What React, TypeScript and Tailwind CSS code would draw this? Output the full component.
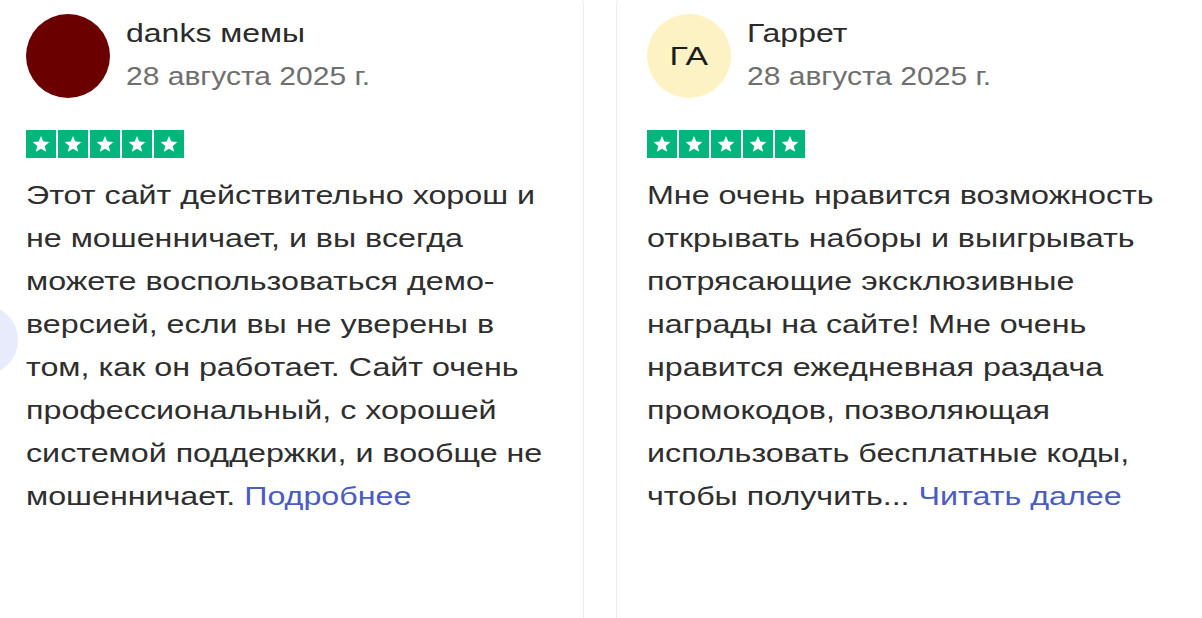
const reviews = [
  {
    name: "danks мемы",
    date: "28 августа 2025 г.",
    initials: "",
    avatar: "bg-[#6b0000]",
    lines: [
      "Этот сайт действительно хорош и",
      "не мошенничает, и вы всегда",
      "можете воспользоваться демо-",
      "версией, если вы не уверены в",
      "том, как он работает. Сайт очень",
      "профессиональный, с хорошей",
      "системой поддержки, и вообще не",
      "мошенничает.",
    ],
    more: "Подробнее",
  },
  {
    name: "Гаррет",
    date: "28 августа 2025 г.",
    initials: "ГА",
    avatar: "bg-[#fdf2c4]",
    lines: [
      "Мне очень нравится возможность",
      "открывать наборы и выигрывать",
      "потрясающие эксклюзивные",
      "награды на сайте! Мне очень",
      "нравится ежедневная раздача",
      "промокодов, позволяющая",
      "использовать бесплатные коды,",
      "чтобы получить...",
    ],
    more: "Читать далее",
  },
];

function Stars() {
  return (
    <div className="flex gap-[2px]">
      {[0, 1, 2, 3, 4].map((i) => (
        <div key={i} className="w-[30px] h-[28px] bg-[#00b67a] flex items-center justify-center">
          <svg viewBox="0 0 24 24" className="w-[20px] h-[20px]" fill="#ffffff">
            <path d="M12 2.5l2.8 6.6 7.2.6-5.5 4.7 1.7 7-6.2-3.8-6.2 3.8 1.7-7L2 9.7l7.2-.6z" />
          </svg>
        </div>
      ))}
    </div>
  );
}

function ReviewCard({ r }: { r: (typeof reviews)[number] }) {
  const last = r.lines.length - 1;
  return (
    <div className="w-[589px] h-[660px] shrink-0 rounded-[14px] border-[1.5px] border-[#ebebeb] bg-white px-[30px] pt-[22px]">
      <div className="flex items-start gap-[16px]">
        <div
          className={`w-[84px] h-[84px] rounded-full ${r.avatar} flex items-center justify-center text-[26px] text-[#1c1c1c] shrink-0`}
        >
          <span className="scale-x-[1.3]">{r.initials}</span>
        </div>
        <div className="pt-[1px]">
          <div className="text-[25px] leading-[36px] text-[#2a2a2a] whitespace-nowrap origin-left scale-x-[1.28]">
            {r.name}
          </div>
          <div className="text-[25px] leading-[36px] mt-[7px] text-[#6f6f6f] whitespace-nowrap origin-left scale-x-[1.2]">
            {r.date}
          </div>
        </div>
      </div>
      <div className="mt-[32px]">
        <Stars />
      </div>
      <div className="mt-[16px] text-[26px] leading-[43px] text-[#2e2e2e]">
        {r.lines.map((line, i) => (
          <div key={i} className="whitespace-nowrap origin-left scale-x-[1.24]">
            {line}
            {i === last && (
              <>
                {" "}
                <span className="text-[#4a5bc4]">{r.more}</span>
              </>
            )}
          </div>
        ))}
      </div>
    </div>
  );
}

export default function App() {
  return (
    <div
      className="relative w-[1202px] h-[618px] overflow-hidden bg-white"
      style={{ fontFamily: '"Liberation Sans", Arial, sans-serif' }}
    >
      <div className="flex gap-[32px] -ml-[5px] -mt-[9px]">
        {reviews.map((r) => (
          <ReviewCard key={r.name} r={r} />
        ))}
      </div>
      <div className="absolute left-[-52px] top-[305px] w-[70px] h-[70px] rounded-full bg-[#e7ebfb]" />
    </div>
  );
}
